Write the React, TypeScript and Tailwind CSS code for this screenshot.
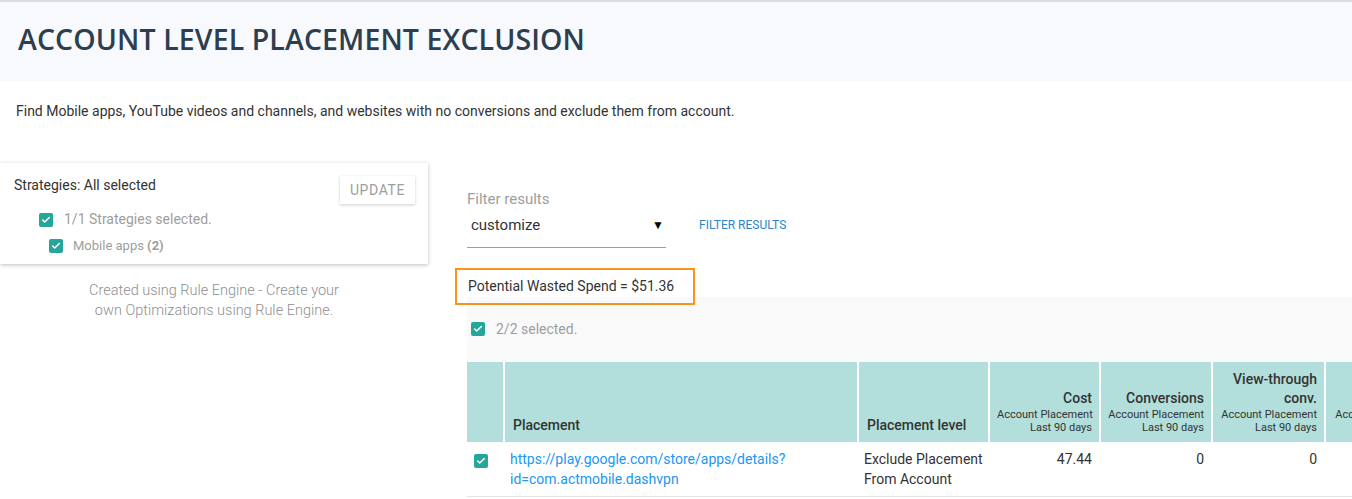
import { Check } from "lucide-react"

function Box({ className = "" }: { className?: string }) {
  return (
    <span className={`inline-flex h-[14px] w-[14px] shrink-0 items-center justify-center rounded-[2px] bg-[#26a69a] ${className}`}>
      <Check className="h-[10px] w-[10px] text-white" strokeWidth={3.5} />
    </span>
  )
}

function HeadCell({ title, className = "" }: { title: React.ReactNode; className?: string }) {
  return (
    <th className={`border-l-2 border-white px-[7px] pb-[8px] text-right align-bottom font-normal whitespace-nowrap ${className}`}>
      <div className="text-[14px] leading-[19px] font-medium text-[#333]">{title}</div>
      <div className="text-[11px] leading-[13px] text-[#333]">
        Account Placement
        <br />
        Last 90 days
      </div>
    </th>
  )
}

export default function App() {
  return (
    <div className="h-[499px] w-[1352px] overflow-hidden bg-white font-['Roboto',sans-serif] text-[#333]">
      <div className="h-[81px] border-t-2 border-[#d6dee4] bg-[#f7f9fc] pl-[18px] pt-[18px]">
        <h1 className="font-['Open_Sans',sans-serif] text-[28.5px] leading-[38px] font-semibold tracking-[0.1px] text-[#2c3e50]">
          ACCOUNT LEVEL PLACEMENT EXCLUSION
        </h1>
      </div>

      <p className="pl-4 pt-[20px] text-[14px] leading-[20px]">
        Find Mobile apps, YouTube videos and channels, and websites with no conversions and exclude them from account.
      </p>

      <div className="mt-[42px] flex">
        <div className="w-[428px] shrink-0">
          <div className="relative h-[101px] bg-white shadow-[0_1px_4px_rgba(0,0,0,0.25)] pl-[14px] pt-[13px]">
            <div className="text-[14px] leading-[18px]">Strategies: All selected</div>
            <button className="absolute right-[13px] top-[13px] h-[28px] w-[75px] bg-white text-[14px] tracking-[0.6px] text-[#9e9e9e] shadow-[0_1px_3px_rgba(0,0,0,0.2)]">
              UPDATE
            </button>
            <div className="mt-[15px] ml-[25px] flex items-center gap-[11px]">
              <Box />
              <span className="text-[14px] text-[#9e9e9e]">1/1 Strategies selected.</span>
            </div>
            <div className="mt-[6px] ml-[35px] flex items-center gap-[10px]">
              <Box />
              <span className="text-[13px] text-[#9e9e9e]">
                Mobile apps <span className="font-bold">(2)</span>
              </span>
            </div>
          </div>
          <p className="mx-auto mt-[17px] w-[270px] text-center text-[14.5px] leading-[20px] font-light text-[#8f8f8f]">
            Created using Rule Engine - Create your own Optimizations using Rule Engine.
          </p>
        </div>

        <div className="ml-[27px] flex-1 pt-[27px]">
          <div className="pl-[12px]">
            <div className="text-[15px] leading-[18px] text-[#9e9e9e]">Filter results</div>
            <div className="mt-[8px] flex items-start">
              <div className="flex h-[32px] w-[199px] items-start justify-between border-b border-[#9e9e9e] pl-[4px] pr-[2px]">
                <span className="text-[15px] leading-[18px]">customize</span>
                <span className="text-[12px] leading-[18px] text-black">▼</span>
              </div>
              <span className="ml-[33px] text-[12px] leading-[18px] text-[#2a86c9]">FILTER RESULTS</span>
            </div>
          </div>

          <div className="relative z-10 mt-[20px] flex h-[37px] w-[240px] items-center border-2 border-[#f7931e] pl-[11px] text-[14px]">
            Potential Wasted Spend = $51.36
          </div>

          <div className="-mt-[8px] ml-[12px] bg-[#f9f9fa] pt-[25px]">
            <div className="flex h-[14px] items-center gap-[11px] pl-[4px]">
              <Box />
              <span className="text-[14px] text-[#9e9e9e]">2/2 selected.</span>
            </div>
            <table className="mt-[26px] w-[971px] table-fixed border-collapse">
              <colgroup>
                <col className="w-[37px]" />
                <col className="w-[354px]" />
                <col className="w-[131px]" />
                <col className="w-[111px]" />
                <col className="w-[112px]" />
                <col className="w-[113px]" />
                <col />
              </colgroup>
              <thead>
                <tr className="h-[80px] bg-[#b2dfdb]">
                  <th />
                  <th className="border-l-2 border-white px-2 pb-[6px] text-left align-bottom text-[14px] font-medium">Placement</th>
                  <th className="border-l-2 border-white px-2 pb-[6px] text-left align-bottom text-[14px] font-medium">Placement level</th>
                  <HeadCell title="Cost" />
                  <HeadCell title="Conversions" />
                  <HeadCell title={<>View-through<br />conv.</>} />
                  <HeadCell title="Clicks" />
                </tr>
              </thead>
              <tbody>
                <tr className="h-[54px] border-b border-[#e6e6e6] bg-white align-top text-[14px]">
                  <td className="pl-[7px] pt-[9px]">
                    <Box />
                  </td>
                  <td className="px-[6px] pt-[7px] leading-[20px] text-[#2196f3]">
                    https://play.google.com/store/apps/details?
                    <br />
                    id=com.actmobile.dashvpn
                  </td>
                  <td className="px-[6px] pt-[7px] leading-[20px]">Exclude Placement From Account</td>
                  <td className="px-2 pt-[7px] text-right leading-[20px]">47.44</td>
                  <td className="px-2 pt-[7px] text-right leading-[20px]">0</td>
                  <td className="px-2 pt-[7px] text-right leading-[20px]">0</td>
                  <td className="px-2 pt-[7px] text-right leading-[20px]" />
                </tr>
              </tbody>
            </table>
          </div>
        </div>
      </div>
    </div>
  )
}
